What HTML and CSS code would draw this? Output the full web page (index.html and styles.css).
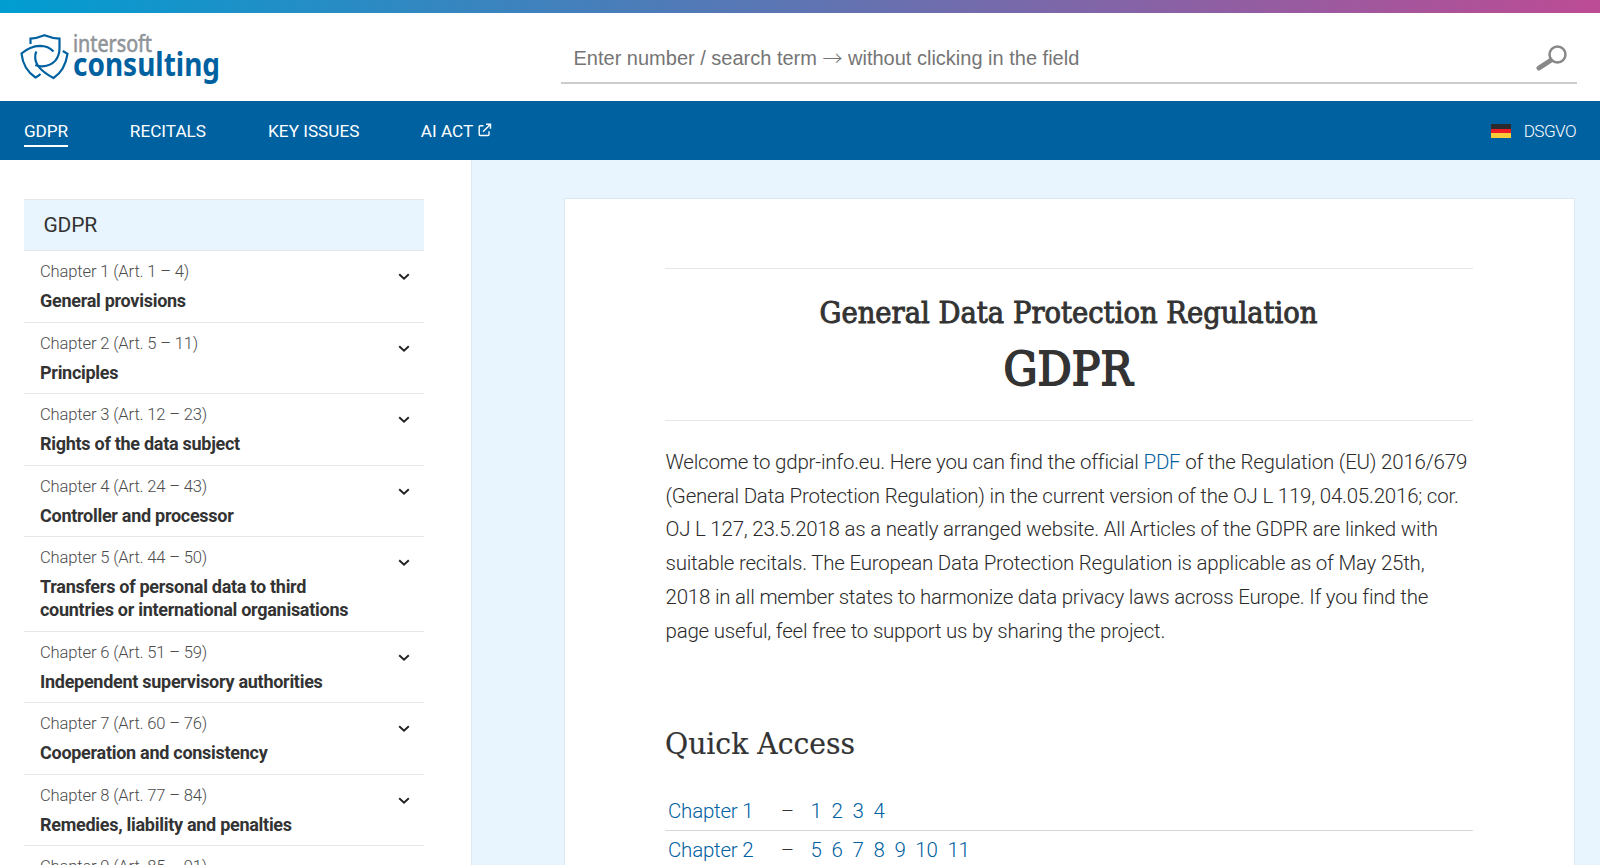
FILE: index.html
```html
<!DOCTYPE html>
<html lang="en">
<head>
<meta charset="utf-8">
<title>General Data Protection Regulation (GDPR)</title>
<link rel="stylesheet" href="styles.css">
</head>
<body>
<div class="topbar"></div>
<header class="header">
  <a class="logo">
    <svg width="230" height="60" viewBox="0 0 230 60">
      <g fill="none" stroke="#0061a1" stroke-width="2.200" stroke-linejoin="miter">
        <path d="M30.500 14V8.600C35.500 8.300 40 7 44.400 5.200C49 7 54 8.300 59.500 8.600V18C59.500 28 54 35.500 42.500 36.300C39.500 36.400 37.500 36 35.300 35"/>
        <path d="M53.500 21.500C50 17.500 46 15.800 40 15.800C33 16 26 19.500 21.500 23.500C22.500 33 26.500 41.500 35.500 47.500C37.500 46.500 39 45.500 40.500 44"/>
        <path d="M62.800 21L67.500 23.800C66 34 62.500 42 53.500 48C45 43.500 35.700 37 35.200 28C35 25.500 35.400 23.500 36.300 21.500"/>
      </g>
      <text class="logo-top" x="73" y="21.500" textLength="79" lengthAdjust="spacingAndGlyphs">intersoft</text>
      <text class="logo-bottom" x="73" y="46.300" textLength="147" lengthAdjust="spacingAndGlyphs">consulting</text>
    </svg>
  </a>
  <div class="search">
    <span>Enter number / search term <span class="arrow">→</span> without clicking in the field</span>
    <svg width="34" height="30" viewBox="0 0 34 30" fill="none" stroke="#888">
      <circle cx="22.500" cy="11.500" r="8" stroke-width="2.500"/>
      <path d="M15.500 17.500L4 25" stroke-width="5" stroke-linecap="round"/>
    </svg>
  </div>
</header>
<nav class="nav">
  <a class="active">GDPR</a><a>RECITALS</a><a>KEY ISSUES</a><a class="ext">AI ACT
    <svg width="14" height="14" viewBox="0 0 14 14" fill="none" stroke="#fff" stroke-width="1.400"><path d="M5.500 2.700H2.200Q1.200 2.700 1.200 3.700V11.500Q1.200 12.500 2.200 12.500H10Q11 12.500 11 11.500V8.200M8 1.200H12.500V5.700M12.300 1.400L5 8.700"/></svg></a>
  <a class="lang"><svg width="20" height="14" viewBox="0 0 20 14"><path fill="#2b2b2d" d="M0 0h20v5H0z"/><path fill="#ed1c24" d="M0 5h20v4H0z"/><path fill="#f9cb38" d="M0 9h20v5H0z"/></svg>DSGVO</a>
</nav>
<div class="page">
  <aside class="sidebar">
    <div class="side-head">GDPR</div>
    <div class="item"><div><small>Chapter 1 (Art. 1 – 4)</small><b>General provisions</b></div><svg class="chev" viewBox="0 0 12 8"><path d="M1.200 1.200L6 5.800L10.800 1.200"/></svg></div>
    <div class="item"><div><small>Chapter 2 (Art. 5 – 11)</small><b>Principles</b></div><svg class="chev" viewBox="0 0 12 8"><path d="M1.200 1.200L6 5.800L10.800 1.200"/></svg></div>
    <div class="item"><div><small>Chapter 3 (Art. 12 – 23)</small><b>Rights of the data subject</b></div><svg class="chev" viewBox="0 0 12 8"><path d="M1.200 1.200L6 5.800L10.800 1.200"/></svg></div>
    <div class="item"><div><small>Chapter 4 (Art. 24 – 43)</small><b>Controller and processor</b></div><svg class="chev" viewBox="0 0 12 8"><path d="M1.200 1.200L6 5.800L10.800 1.200"/></svg></div>
    <div class="item"><div><small>Chapter 5 (Art. 44 – 50)</small><b>Transfers of personal data to third<br>countries or international organisations</b></div><svg class="chev" viewBox="0 0 12 8"><path d="M1.200 1.200L6 5.800L10.800 1.200"/></svg></div>
    <div class="item"><div><small>Chapter 6 (Art. 51 – 59)</small><b>Independent supervisory authorities</b></div><svg class="chev" viewBox="0 0 12 8"><path d="M1.200 1.200L6 5.800L10.800 1.200"/></svg></div>
    <div class="item"><div><small>Chapter 7 (Art. 60 – 76)</small><b>Cooperation and consistency</b></div><svg class="chev" viewBox="0 0 12 8"><path d="M1.200 1.200L6 5.800L10.800 1.200"/></svg></div>
    <div class="item"><div><small>Chapter 8 (Art. 77 – 84)</small><b>Remedies, liability and penalties</b></div><svg class="chev" viewBox="0 0 12 8"><path d="M1.200 1.200L6 5.800L10.800 1.200"/></svg></div>
    <div class="item"><div><small>Chapter 9 (Art. 85 – 91)</small></div></div>
  </aside>
  <main class="main">
    <article class="card">
      <h1 class="title">
        <svg width="808" height="150" viewBox="0 0 808 150">
          <text class="t1" x="154.500" y="53.500" textLength="498" lengthAdjust="spacingAndGlyphs">General Data Protection Regulation</text>
          <text class="t2" x="338.500" y="116" textLength="129" lengthAdjust="spacingAndGlyphs">GDPR</text>
        </svg>
      </h1>
      <p class="intro">Welcome to gdpr-info.eu. Here you can find the official <a>PDF</a> of the Regulation (EU) 2016/679<br>(General Data Protection Regulation) in the current version of the OJ L 119, 04.05.2016; cor.<br>OJ L 127, 23.5.2018 as a neatly arranged website. All Articles of the GDPR are linked with<br>suitable recitals. The European Data Protection Regulation is applicable as of May 25th,<br>2018 in all member states to harmonize data privacy laws across Europe. If you find the<br>page useful, feel free to support us by sharing the project.</p>
      <h2 class="quick"><svg width="300" height="50" viewBox="0 0 300 50"><text class="t3" x="0" y="34.500" textLength="190" lengthAdjust="spacingAndGlyphs">Quick Access</text></svg></h2>
      <div class="row"><a class="ch">Chapter 1</a><span class="dash">–</span><a>1</a><a>2</a><a>3</a><a>4</a></div>
      <div class="row"><a class="ch">Chapter 2</a><span class="dash">–</span><a>5</a><a>6</a><a>7</a><a>8</a><a>9</a><a>10</a><a>11</a></div>
    </article>
  </main>
</div>
</body>
</html>
```
FILE: styles.css
```css
* { box-sizing: border-box; }
body { margin: 0; height: 865px; overflow: hidden; display: flex; flex-direction: column; font-family: Roboto, sans-serif; color: #333; background: #fff; }
.topbar { height: 13px; flex: none; background: linear-gradient(90deg, #009dd1, #bc4b94); }
.header { height: 88px; flex: none; display: flex; justify-content: space-between; padding: 17px 23px 0 0; }
.logo svg { display: block; }
.logo-top { font: 400 23px "Noto Sans", sans-serif; fill: #8f9499; stroke: #8f9499; stroke-width: .6; }
.logo-bottom { font: 700 32px "Noto Sans", sans-serif; fill: #0061a1; }
.search { width: 1016px; height: 54px; border-bottom: 2px solid #ccc; display: flex; justify-content: space-between; padding: 0 8px 0 12.500px; font: 20px/56px "Liberation Sans", sans-serif; color: #757575; }
.search svg { margin-top: 13px; }
.arrow { font-family: "Noto Sans CJK JP", sans-serif; font-weight: 300; line-height: 1; position: relative; top: 1px; }
.nav { height: 59px; flex: none; background: #0061a1; color: #fff; display: flex; align-items: flex-start; padding: 15px 24px 0; font-size: 17.200px; line-height: 30px; }
.nav a { margin-right: 62px; height: 31.500px; }
.nav .active { border-bottom: 2px solid #fff; height: 31px; letter-spacing: -.15px; }
.nav .ext { margin-left: -.7px; }
.nav .ext svg { margin-left: 1px; }
.nav .lang { margin: 0 0 0 auto; height: 30px; display: flex; align-items: center; gap: 13px; font-weight: 300; letter-spacing: -.6px; }
.page { flex: 1; min-height: 0; display: flex; }
.sidebar { width: 472px; flex: none; padding: 39px 47px 0 24px; border-right: 1px solid #dfe9ef; overflow: hidden; }
.side-head { height: 52px; background: #e8f5fe; border: solid #e5e7e8; border-width: 1px 0; padding-left: 19.500px; font-size: 21px; line-height: 50px; letter-spacing: -.2px; }
.item { display: flex; justify-content: space-between; border-bottom: 1px solid #e7e7e7; padding: 6px 14px 9.500px 16px; }
.item small { display: block; font-size: 16.600px; line-height: 29.500px; font-weight: 300; letter-spacing: -.16px; color: #4c4c4c; }
.item b { display: block; font-size: 18px; line-height: 23px; font-weight: 700; letter-spacing: -.28px; padding-top: 2.500px; }
.chev { width: 12px; height: 8px; margin-top: 16px; fill: none; stroke: #222; stroke-width: 1.900; }
.main { flex: 1; background: #e8f5fe; padding: 38px 26px 0 92px; overflow: hidden; }
.card { width: 1011px; height: 700px; background: #fff; padding: 69px 100px 0; border: 1px solid #dbe8f0; }
.title { margin: 0; width: 808px; height: 153px; border: solid #e7e7e7; border-width: 1px 0; }
.title svg { display: block; }
.t1, .t2, .t3 { font-family: "Roboto Slab", "DejaVu Serif", serif; fill: #333; }
.t1 { font-size: 30px; font-weight: 500; stroke: #333; stroke-width: 1; }
.t2 { font-size: 46px; font-weight: 500; stroke: #333; stroke-width: 1.800; }
.t3 { font-size: 29px; font-weight: 400; stroke: #333; stroke-width: .2; }
.intro { margin: 25px 0 0 .5px; font-size: 20.500px; line-height: 33.700px; font-weight: 300; white-space: nowrap; letter-spacing: -.22px; color: #2b2b2b; }
a { color: inherit; }
.intro a, .row a { color: #0061a1; }
.quick { margin: 71px 0 0; height: 73px; }
.row { width: 808px; height: 39px; border-bottom: 1px solid #d5d8da; display: flex; gap: 9.800px; padding-left: 3px; font-size: 20.500px; line-height: 38px; font-weight: 300; letter-spacing: -.22px; }
.row .ch { width: 103px; }
.row .dash { width: 20px; }
```
